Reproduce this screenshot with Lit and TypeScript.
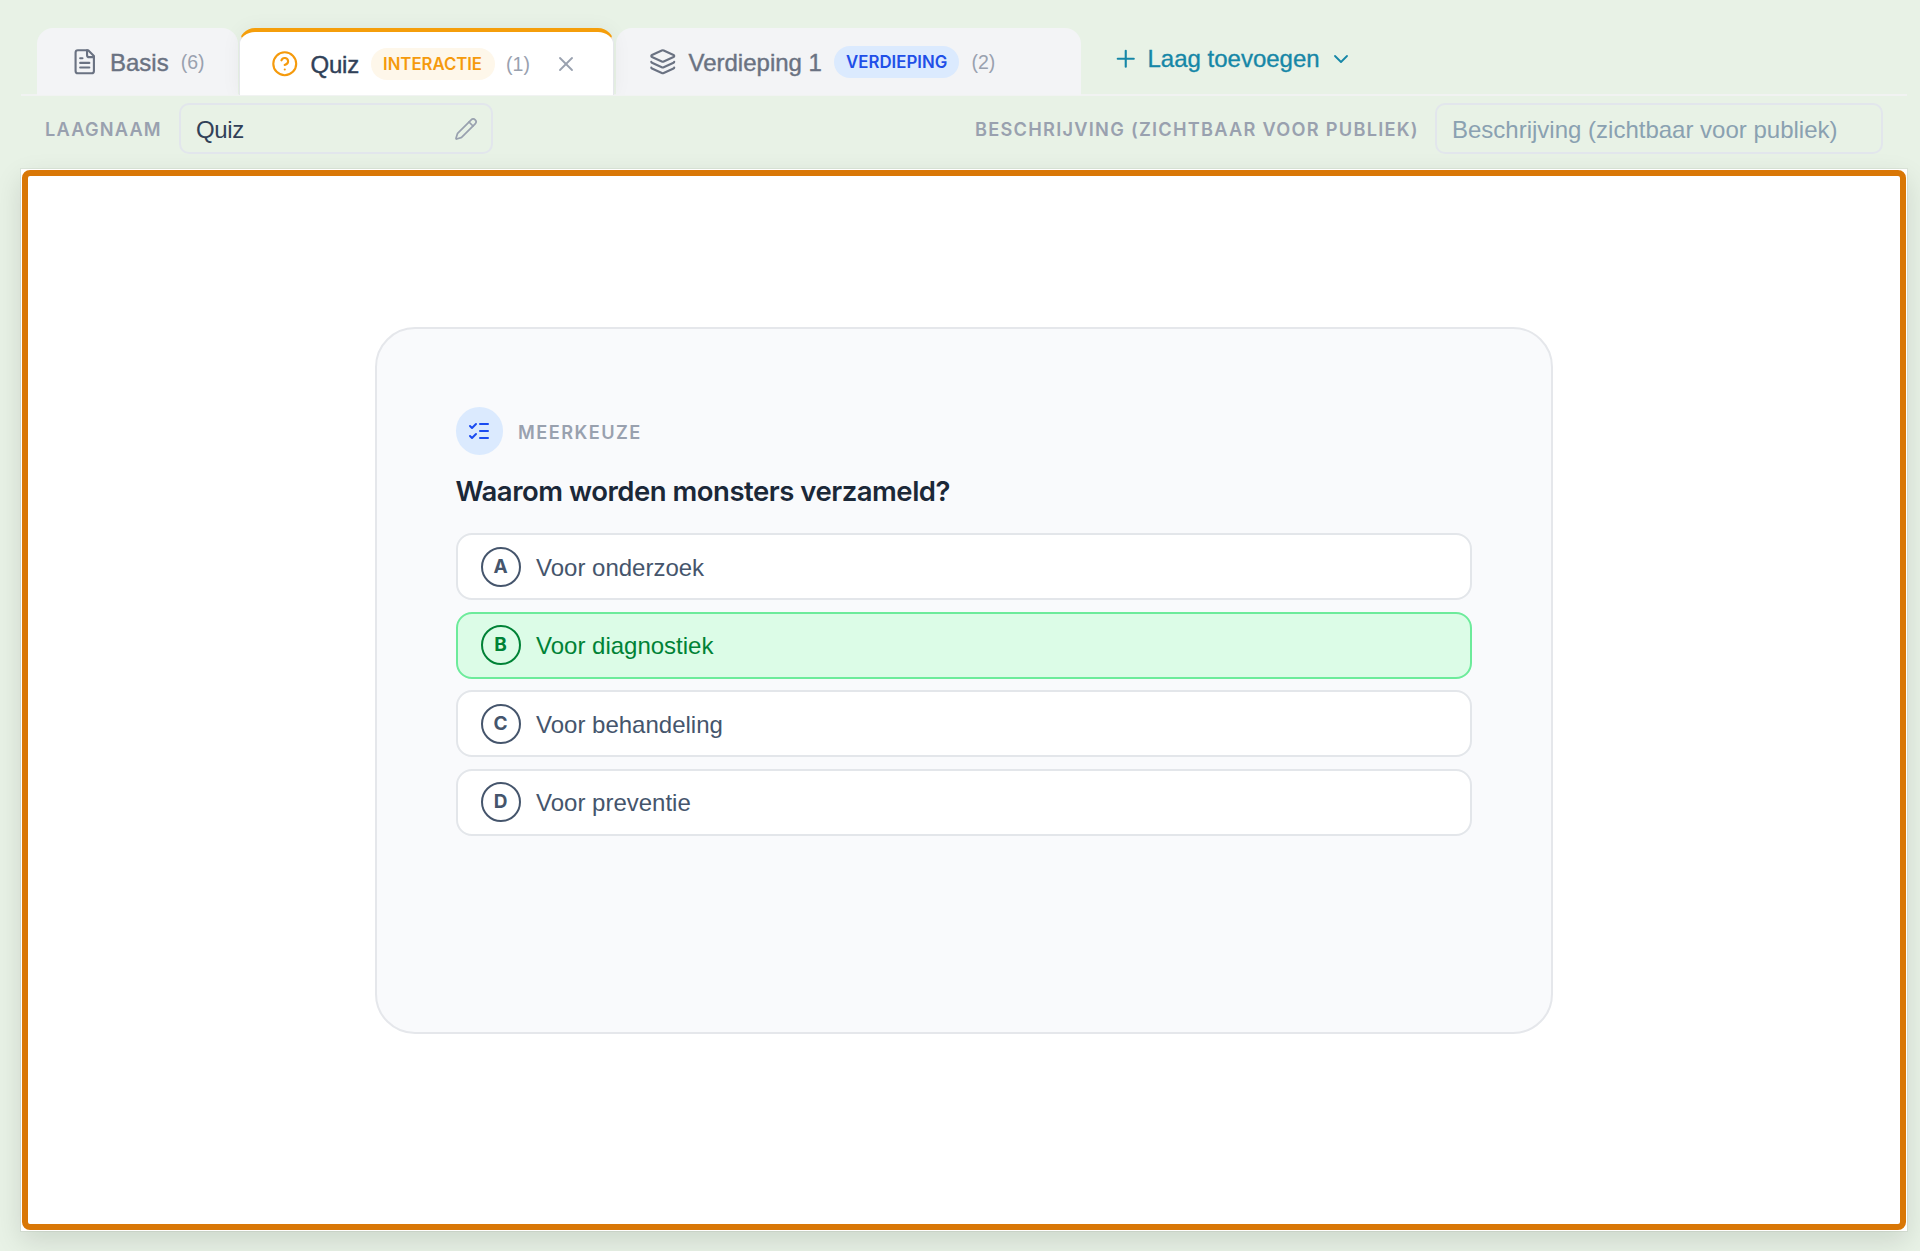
import { LitElement, html, css, svg, type TemplateResult } from "lit";
import { customElement, property } from "lit/decorators.js";
import { classMap } from "lit/directives/class-map.js";

const glyphs: Record<string, TemplateResult> = {
  file: svg`<path d="M15 2H6a2 2 0 0 0-2 2v16a2 2 0 0 0 2 2h12a2 2 0 0 0 2-2V7Z"/><path d="M14 2v4a2 2 0 0 0 2 2h4"/><path d="M10 9H8"/><path d="M16 13H8"/><path d="M16 17H8"/>`,
  question: svg`<circle cx="12" cy="12" r="10"/><path d="M9.09 9a3 3 0 0 1 5.83 1c0 2-3 3-3 3"/><path d="M12 17h.01"/>`,
  layers: svg`<path d="M12.83 2.18a2 2 0 0 0-1.66 0L2.6 6.08a1 1 0 0 0 0 1.83l8.58 3.91a2 2 0 0 0 1.66 0l8.58-3.9a1 1 0 0 0 0-1.83z"/><path d="M2 12a1 1 0 0 0 .58.91l8.6 3.91a2 2 0 0 0 1.65 0l8.58-3.9A1 1 0 0 0 22 12"/><path d="M2 17a1 1 0 0 0 .58.91l8.6 3.91a2 2 0 0 0 1.65 0l8.58-3.9A1 1 0 0 0 22 17"/>`,
  close: svg`<path d="M18 6 6 18"/><path d="m6 6 12 12"/>`,
  plus: svg`<path d="M5 12h14"/><path d="M12 5v14"/>`,
  chevron: svg`<path d="m6 9 6 6 6-6"/>`,
  pencil: svg`<path d="M21.174 6.812a1 1 0 0 0-3.986-3.987L3.842 16.174a2 2 0 0 0-.5.83l-1.321 4.352a.5.5 0 0 0 .623.622l4.353-1.32a2 2 0 0 0 .83-.497z"/><path d="m15 5 4 4"/>`,
  checks: svg`<path d="M13 5h8"/><path d="M13 12h8"/><path d="M13 19h8"/><path d="m3 17 2 2 4-4"/><path d="m3 7 2 2 4-4"/>`,
};

@customElement("ui-icon")
class UiIcon extends LitElement {
  @property() name = "file";
  static styles = css`
    :host { display: block; flex: none; width: 27.5px; height: 27.5px; stroke-width: 1.85; }
    .icon { display: block; width: 100%; height: 100%; fill: none; stroke: currentColor; stroke-linecap: round; stroke-linejoin: round; }
  `;
  render() {
    return html`<svg class="icon" viewBox="0 0 24 24" aria-hidden="true">${glyphs[this.name]}</svg>`;
  }
}

@customElement("quiz-card")
class QuizCard extends LitElement {
  private options = [
    { letter: "A", text: "Voor onderzoek", correct: false },
    { letter: "B", text: "Voor diagnostiek", correct: true },
    { letter: "C", text: "Voor behandeling", correct: false },
    { letter: "D", text: "Voor preventie", correct: false },
  ];
  static styles = css`
    :host { display: block; box-sizing: border-box; width: 1178px; height: 707px; padding: 78px 79px 78px 78.5px; border: 2px solid #e5e7eb; border-radius: 40px; background: #f9fafc; }
    .kind { display: flex; align-items: center; gap: 15px; height: 48px; }
    .bubble { display: flex; align-items: center; justify-content: center; width: 47.5px; height: 47.5px; border-radius: 50%; background: #dbeafe; color: #1a4bf0; }
    .bubble ui-icon { width: 24px; height: 24px; stroke-width: 2; }
    .kind-name { padding-top: 1px; font: 600 18.2px/24px Inter, sans-serif; letter-spacing: 1.45px; color: #99a1af; }
    .question { margin: 19px 0 0; height: 59px; font: 600 27.5px/34px Inter, sans-serif; letter-spacing: -0.48px; color: #1b2838; }
    .options { display: flex; flex-direction: column; gap: 11.5px; margin: 0; padding: 0; list-style: none; }
    .option { display: flex; align-items: center; gap: 15.5px; box-sizing: border-box; height: 67px; padding: 0 23px; border: 2px solid #e3e6ea; border-radius: 16px; background: #fff; color: #45556c; font-size: 24px; }
    .option.correct { background: #dcfce7; border-color: #6deb9b; color: #008236; }
    .letter { display: flex; align-items: center; justify-content: center; box-sizing: border-box; width: 40px; height: 40px; border: 2px solid currentColor; border-radius: 50%; font: 700 19px/20px Inter, sans-serif; }
    .answer { padding-top: 2px; line-height: 28px; }
  `;
  render() {
    return html`
      <div class="kind"><span class="bubble"><ui-icon name="checks"></ui-icon></span><span class="kind-name">MEERKEUZE</span></div>
      <h2 class="question">Waarom worden monsters verzameld?</h2>
      <ul class="options">
        ${this.options.map(o => html`<li class=${classMap({ option: true, correct: o.correct })}><span class="letter">${o.letter}</span><span class="answer">${o.text}</span></li>`)}
      </ul>
    `;
  }
}

@customElement("app-root")
class AppRoot extends LitElement {
  static styles = css`
    :host { display: flex; flex-direction: column; box-sizing: border-box; height: 1251px; padding: 28px 13px 20px 21px; background: #e8f2e6; font-family: "Liberation Sans", Arial, sans-serif; overflow: hidden; }
    .tabs { display: flex; box-sizing: border-box; height: 68px; padding-left: 16px; border-bottom: 2px solid #f1f3f2; }
    .tab { display: flex; align-items: center; box-sizing: border-box; height: 67px; border-radius: 16px 16px 0 0; background: #f3f4f6; color: #6a7282; }
    .tab.basis { width: 201px; padding-left: 33.5px; margin-right: 1px; }
    .tab.quiz { position: relative; width: 375px; padding-left: 31px; margin-right: 2px; border: 1px solid #e5e7eb; border-top: 4px solid #f59e0b; border-bottom: 0; background: #fff; box-shadow: 0 0 20px rgba(0, 0, 0, 0.05); clip-path: inset(-28px -24px 0 -24px); }
    .tab.verdieping { width: 465px; padding-left: 33px; }
    .name { padding-top: 2px; margin-left: 12px; font-size: 24px; line-height: 28px; -webkit-text-stroke: 0.4px currentColor; }
    .quiz .name { margin-left: 12px; letter-spacing: -0.2px; color: #314158; }
    .quiz .kind { color: #f59a0c; }
    .count { padding-top: 1px; margin-left: 12px; font-size: 19.5px; line-height: 24px; color: #99a1af; }
    .badge { box-sizing: border-box; height: 32px; margin-left: 12px; padding: 0 12px; border-radius: 16px; font: 600 16.8px/32px Inter, sans-serif; }
    .badge.orange { width: 124px; background: #fef7ea; color: #f59a0c; letter-spacing: -0.05px; }
    .badge.blue { width: 125.5px; background: #dbeafe; color: #1f4fe8; letter-spacing: 0.05px; }
    .quiz .count { margin-left: 11px; }
    .close { width: 24px; height: 24px; margin-left: 24px; color: #99a1af; }
    .add { display: flex; align-items: center; height: 61px; margin-left: 31px; color: #1687a7; }
    .add-text { margin: 0 9px 0 8px; font-size: 24px; line-height: 28px; -webkit-text-stroke: 0.35px currentColor; }
    .add .down { width: 24px; height: 24px; }
    .fields { display: flex; align-items: center; box-sizing: border-box; height: 73px; padding: 7px 24px 15px 24px; }
    .label { padding-top: 1px; font: 600 18.2px/24px Inter, sans-serif; color: #99a1af; white-space: nowrap; }
    .label.short { width: 118px; letter-spacing: 1.2px; }
    .label.long { width: 444px; margin-left: auto; letter-spacing: 1.26px; }
    .field { display: flex; align-items: center; justify-content: space-between; box-sizing: border-box; height: 51px; padding: 0 13.5px 0 15px; margin-left: 16px; border: 2px solid #e2e6ec; border-radius: 10px; font-size: 24px; color: #314158; }
    .field.title { width: 314px; }
    .field.title .value { letter-spacing: -0.4px; }
    .field.about { width: 448px; color: #8aa1b1; }
    .field ui-icon { width: 24px; height: 24px; stroke-width: 1.75; color: #99a1af; }
    .value { padding-top: 2px; line-height: 28px; white-space: nowrap; }
    .sheet { box-sizing: border-box; height: 1062px; padding: 1px; background: #fff; box-shadow: 0 0 0 1px rgba(0, 20, 0, 0.05), 0 10px 26px rgba(0, 20, 0, 0.12); }
    .canvas { display: flex; justify-content: center; box-sizing: border-box; height: 100%; padding-top: 151px; border: 6px solid #d97706; border-radius: 8px; }
  `;
  render() {
    return html`
      <div class="tabs">
        <div class="tab basis"><ui-icon name="file"></ui-icon><span class="name">Basis</span><span class="count">(6)</span></div>
        <div class="tab quiz"><ui-icon class="kind" name="question"></ui-icon><span class="name">Quiz</span><span class="badge orange">INTERACTIE</span><span class="count">(1)</span><ui-icon class="close" name="close"></ui-icon></div>
        <div class="tab verdieping"><ui-icon name="layers"></ui-icon><span class="name">Verdieping 1</span><span class="badge blue">VERDIEPING</span><span class="count">(2)</span></div>
        <div class="add"><ui-icon name="plus"></ui-icon><span class="add-text">Laag toevoegen</span><ui-icon class="down" name="chevron"></ui-icon></div>
      </div>
      <div class="fields">
        <span class="label short">LAAGNAAM</span>
        <div class="field title"><span class="value">Quiz</span><ui-icon name="pencil"></ui-icon></div>
        <span class="label long">BESCHRIJVING (ZICHTBAAR VOOR PUBLIEK)</span>
        <div class="field about"><span class="value">Beschrijving (zichtbaar voor publiek)</span></div>
      </div>
      <div class="sheet"><div class="canvas"><quiz-card></quiz-card></div></div>
    `;
  }
}
